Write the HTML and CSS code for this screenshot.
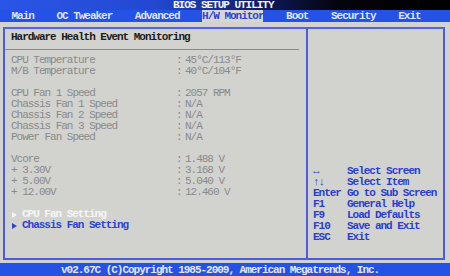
FILE: index.html
```html
<!DOCTYPE html>
<html lang="en">
<head>
  <meta charset="UTF-8">
  <title>BIOS Setup Utility</title>
  <link rel="stylesheet" href="styles.css">
</head>
<body>

  <div class="titlebar">BIOS SETUP UTILITY</div>

  <!-- Top menu -->
  <div class="menubar">
    <span>Main</span>
    <span>OC Tweaker</span>
    <span>Advanced</span>
    <span class="active">H/W Monitor</span>
    <span>Boot</span>
    <span>Security</span>
    <span>Exit</span>
  </div>

  <div class="main">
    <div class="frame">
      <!-- Monitor values -->
      <div class="left">
        <div class="heading">Hardware Health Event Monitoring</div>
        <div class="rows">
          <span>CPU Temperature</span><span>:</span><span>45°C/113°F</span>
          <span>M/B Temperature</span><span>:</span><span>40°C/104°F</span>
          <span class="gap"></span>
          <span>CPU Fan 1 Speed</span><span>:</span><span>2057 RPM</span>
          <span>Chassis Fan 1 Speed</span><span>:</span><span>N/A</span>
          <span>Chassis Fan 2 Speed</span><span>:</span><span>N/A</span>
          <span>Chassis Fan 3 Speed</span><span>:</span><span>N/A</span>
          <span>Power Fan Speed</span><span>:</span><span>N/A</span>
          <span class="gap"></span>
          <span>Vcore</span><span>:</span><span>1.488 V</span>
          <span>+ 3.30V</span><span>:</span><span>3.168 V</span>
          <span>+ 5.00V</span><span>:</span><span>5.040 V</span>
          <span>+ 12.00V</span><span>:</span><span>12.460 V</span>
          <span class="gap"></span>
          <span class="sub selected">CPU Fan Setting</span>
          <span class="sub">Chassis Fan Setting</span>
        </div>
      </div>

      <!-- Key help -->
      <div class="right">
        <div class="help">
          <span>↔</span><span>Select Screen</span>
          <span>↑↓</span><span>Select Item</span>
          <span>Enter</span><span>Go to Sub Screen</span>
          <span>F1</span><span>General Help</span>
          <span>F9</span><span>Load Defaults</span>
          <span>F10</span><span>Save and Exit</span>
          <span>ESC</span><span>Exit</span>
        </div>
      </div>
    </div>
  </div>

  <div class="footer">v02.67C (C)Copyright 1985-2009, American Megatrends, Inc.</div>

</body>
</html>
```

FILE: styles.css
```css
* {
  margin: 0;
  padding: 0;
  box-sizing: border-box;
}

body {
  width: 450px;
  height: 276px;
  overflow: hidden;
  background-color: #d2d2cf;
  font-family: "Liberation Mono", "DejaVu Sans Mono", monospace;
  font-size: 11px;
  letter-spacing: -1.02px;
}

.titlebar {
  height: 10px;
  line-height: 10px;
  padding-left: 173px;
  color: #f4f4f4;
  font-weight: bold;
  background: linear-gradient(to right, #2a56e6 0%, #2248d0 35%, #101a60 58%, #04040c 75%, #000 100%);
}

.menubar {
  height: 12px;
  line-height: 12px;
  display: flex;
  gap: 22.6px;
  padding-left: 11.5px;
  background-color: #2452e4;
  color: #dfe4f4;
  font-weight: bold;
}

.menubar .active {
  background-color: #d6d6d4;
  color: #2a44d8;
}

.main {
  height: 241px;
  padding: 5px 5px 3px 3px;
}

.frame {
  height: 100%;
  display: grid;
  grid-template-columns: 301px 1fr;
  border: 2px solid #4b5ce0;
  border-top-color: #5464e2;
}

/* Left side */
.left {
  padding: 3px 0 0 0;
}

.heading {
  line-height: 11px;
  margin-right: 7px;
  padding: 0 0 6px 6px;
  border-bottom: 1px solid #7480e4;
  color: #1c1c1c;
  font-weight: bold;
}

.rows {
  display: grid;
  grid-template-columns: 165px 9px 1fr;
  grid-auto-rows: 11px;
  line-height: 11px;
  margin-top: 5px;
  padding-left: 6px;
  color: #8a8a8a;
}

.rows .gap {
  grid-column: 1 / 4;
}

.rows .sub {
  grid-column: 1 / 4;
  padding-left: 11px;
  position: relative;
  color: #2c42d4;
  font-weight: bold;
}

.rows .sub::before {
  content: "";
  position: absolute;
  left: 1px;
  top: 3px;
  border-left: 5px solid #2c42d4;
  border-top: 3px solid transparent;
  border-bottom: 3px solid transparent;
}

.rows .selected {
  color: #f6f6f6;
}

.rows .selected::before {
  border-left-color: #f6f6f6;
}

/* Right side */
.right {
  border-left: 2px solid #4b5ce0;
  padding: 137px 0 0 5px;
}

.help {
  display: grid;
  grid-template-columns: 34px 1fr;
  grid-auto-rows: 11px;
  line-height: 11px;
  color: #2a3ed2;
  font-weight: bold;
}

.footer {
  height: 13px;
  line-height: 14px;
  padding-left: 61px;
  background-color: #2452e4;
  color: #e4e8f6;
  font-weight: bold;
}
```
